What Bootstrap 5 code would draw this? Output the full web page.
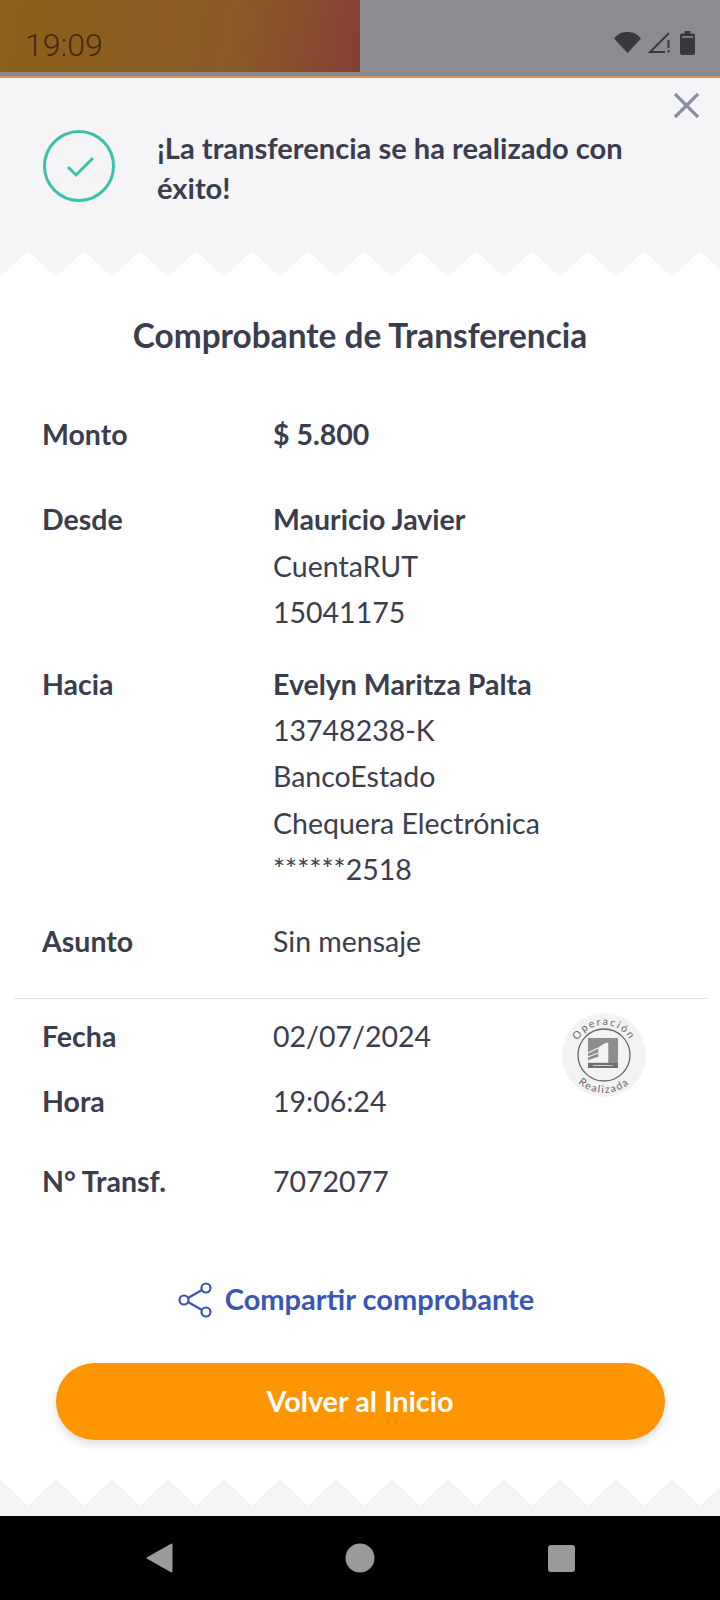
<!DOCTYPE html>
<html lang="es">
<head>
    <meta charset="UTF-8">
    <meta name="viewport" content="width=device-width, initial-scale=1.0">
    <title>Comprobante de Transferencia</title>
    <link href="https://cdn.jsdelivr.net/npm/bootstrap@5.3.0/dist/css/bootstrap.min.css" rel="stylesheet">
    <style>
        body {
            width: 720px;
            height: 1600px;
            overflow: hidden;
            background: #fff;
            font-family: Lato, "Liberation Sans", sans-serif;
            color: #3a3d4e;
            font-size: 28.5px;
        }
        .status-strip {
            height: 78px;
            padding: 31px 25px 0 25px;
            background-color: #8b8c91;
            background-image: linear-gradient(100deg, #8c6118 0%, #8b5a28 65%, #853f34 100%);
            background-size: 360px 72px;
            background-repeat: no-repeat;
            border-bottom: 2px solid #df9350;
        }
        .status-time {
            font-family: Roboto, sans-serif;
            font-size: 32px;
            font-weight: 300;
            line-height: 28px;
            color: #3d2a12;
        }
        .status-icons { gap: 7px; }
        .top-panel {
            height: 174px;
            background: #f5f5f8;
            padding: 52px 50px 0 43px;
        }
        .close-btn {
            position: absolute;
            top: 14px;
            right: 20px;
        }
        .top-msg {
            font-size: 29.1px;
            font-weight: 700;
            line-height: 40px;
            margin: -2px 0 0 42px;
        }
        .zigzag { display: block; }
        .receipt-title {
            font-size: 33.4px;
            font-weight: 700;
            line-height: 40px;
            margin: 37px 0 56px;
            text-align: center;
        }
        .info-row {
            display: flex;
            padding-left: 42px;
            line-height: 46.4px;
        }
        .info-label {
            width: 231px;
            flex: none;
            font-weight: 700;
        }
        .info-value b { font-weight: 700; }
        .row-from { margin-top: 39px; }
        .row-to { margin-top: 25px; }
        .row-subject { margin-top: 25px; }
        .row-date { margin-top: 14px; }
        .row-time { margin-top: 19px; }
        .row-number { margin-top: 33px; }
        .info-rule {
            height: 1px;
            margin: 34px 12px 0 14px;
            background: #e2e2e4;
        }
        .fecha-block { position: relative; }
        .seal {
            position: absolute;
            top: -1px;
            left: 561px;
        }
        .share-link {
            color: #3b55b5;
            font-size: 29px;
            font-weight: 700;
            text-decoration: none;
            margin-top: 71px;
            height: 46px;
            gap: 13px;
            padding-right: 8px;
        }
        .share-icon { margin-top: 4px; }
        .home-btn {
            display: block;
            width: 609px;
            height: 77px;
            margin: 42px auto 0;
            border-radius: 39px;
            border: 0;
            background: #ff9500;
            color: #fff;
            font-size: 28.8px;
            font-weight: 700;
            box-shadow: 0 4px 10px rgba(0, 0, 0, .14);
        }
        .foot-gap { height: 39px; }
        .foot-band { height: 10px; background: #f5f5f8; }
        .nav-bar {
            height: 84px;
            background: #000;
        }
    </style>
</head>
<body>

<!-- Status bar -->
<div class="status-strip d-flex justify-content-between align-items-start">
    <span class="status-time">19:09</span>
    <div class="status-icons d-flex align-items-start">
        <svg width="27" height="22" viewBox="0 0 27 22"><path d="M0 7.500C3.500 3 8 1 13.500 1S23.500 3 27 7.500L13.500 22z" fill="#38383c"/></svg>
        <svg width="25" height="23" viewBox="0 0 25 23">
            <path d="M21 2L2 21h15" fill="none" stroke="#38383c" stroke-width="1.800"/>
            <path d="M20.500 9v8M20.500 19v2.500" stroke="#38383c" stroke-width="2"/>
        </svg>
        <svg width="15" height="24" viewBox="0 0 15 24"><path d="M4.500 0h6v2.500h2.500a2 2 0 0 1 2 2V22a2 2 0 0 1-2 2H2a2 2 0 0 1-2-2V4.500a2 2 0 0 1 2-2h2.500z" fill="#38383c"/><rect x="2" y="5" width="11" height="2" fill="#77777b"/></svg>
    </div>
</div>

<!-- Success message -->
<div class="top-panel d-flex align-items-start position-relative">
    <svg class="close-btn" width="27" height="27" viewBox="0 0 27 27"><path d="M2 2l23 23M25 2L2 25" stroke="#8a8fa3" stroke-width="3.200" fill="none"/></svg>
    <svg class="flex-shrink-0" width="72" height="72" viewBox="0 0 72 72">
        <circle cx="36" cy="36" r="34.500" fill="none" stroke="#3cc0ab" stroke-width="3"/>
        <path d="M25 37l8 8 17-17" fill="none" stroke="#3cc0ab" stroke-width="3"/>
    </svg>
    <p class="top-msg">¡La transferencia se ha realizado con éxito!</p>
</div>

<!-- Torn edge, top of the receipt -->
<svg class="zigzag" width="720" height="26" viewBox="0 0 720 26">
    <rect width="720" height="26" fill="#f5f5f8"/>
    <path d="M-28 26L0 25 28-1 56 25 84-1 112 25 140-1 168 25 196-1 224 25 252-1 280 25 308-1 336 25 364-1 392 25 420-1 448 25 476-1 504 25 532-1 560 25 588-1 616 25 644-1 672 25 700-1 728 25V26z" fill="#fff"/>
</svg>

<h1 class="receipt-title">Comprobante de Transferencia</h1>

<div class="info-row"><div class="info-label">Monto</div><div class="info-value"><b>$ 5.800</b></div></div>
<div class="info-row row-from">
    <div class="info-label">Desde</div>
    <div class="info-value"><b>Mauricio Javier</b><br>CuentaRUT<br>15041175</div>
</div>
<div class="info-row row-to">
    <div class="info-label">Hacia</div>
    <div class="info-value"><b>Evelyn Maritza Palta</b><br>13748238-K<br>BancoEstado<br>Chequera Electrónica<br>******2518</div>
</div>
<div class="info-row row-subject"><div class="info-label">Asunto</div><div class="info-value">Sin mensaje</div></div>

<div class="info-rule"></div>

<div class="fecha-block">
    <div class="info-row row-date"><div class="info-label">Fecha</div><div class="info-value">02/07/2024</div></div>
    <div class="info-row row-time"><div class="info-label">Hora</div><div class="info-value">19:06:24</div></div>
    <svg class="seal" width="86" height="86" viewBox="0 0 86 86">
        <defs>
            <path id="sealTop" d="M13 43a30 30 0 0 1 60 0"/>
            <path id="sealBottom" d="M5 43a38 38 0 0 0 76 0"/>
        </defs>
        <circle cx="43" cy="43" r="42" fill="#f3f3f3"/>
        <circle cx="43" cy="43" r="26" fill="none" stroke="#666" stroke-width="1.300"/>
        <rect x="27" y="26" width="30" height="30" fill="#8e8e8e"/>
        <path d="M37.300 35.300L44 31.300l3.300-.6v20h-20V48l10-3.300z" fill="#f3f3f3"/>
        <path d="M27 41l10-5M27 45l10-4" stroke="#f3f3f3" stroke-width="1.300"/>
        <rect x="27" y="51" width="30" height="5" fill="#6e6e6e"/>
        <rect x="32" y="53" width="20" height="1" fill="#cfcfcf"/>
        <text font-family="Lato, sans-serif" font-size="10.500" letter-spacing="1.800" fill="#666"><textPath href="#sealTop" startOffset="50%" text-anchor="middle">Operación</textPath></text>
        <text font-family="Lato, sans-serif" font-size="10.500" letter-spacing="1.500" fill="#666"><textPath href="#sealBottom" startOffset="50%" text-anchor="middle">Realizada</textPath></text>
    </svg>
</div>

<div class="info-row row-number"><div class="info-label">N° Transf.</div><div class="info-value">7072077</div></div>

<!-- Actions -->
<a class="share-link d-flex justify-content-center align-items-center" href="#">
    <svg class="share-icon" width="34" height="36" viewBox="0 0 34 36">
        <g fill="none" stroke="#3b55b5" stroke-width="2.200">
            <circle cx="6" cy="18" r="4.500"/><circle cx="28" cy="6" r="4.500"/><circle cx="28" cy="30" r="4.500"/>
            <path d="M10 16L24 8M10 20l14 8"/>
        </g>
    </svg>
    Compartir comprobante
</a>
<button class="home-btn" type="button">Volver al Inicio</button>
<div class="foot-gap"></div>

<!-- Torn edge, bottom of the receipt -->
<svg class="zigzag" width="720" height="27" viewBox="0 0 720 27">
    <rect width="720" height="27" fill="#f5f5f8"/>
    <path d="M0 0L28 27 56 0 84 27 112 0 140 27 168 0 196 27 224 0 252 27 280 0 308 27 336 0 364 27 392 0 420 27 448 0 476 27 504 0 532 27 560 0 588 27 616 0 644 27 672 0 700 27 720 8V0z" fill="#fff"/>
</svg>
<div class="foot-band"></div>

<!-- Navigation bar -->
<div class="nav-bar d-flex align-items-center">
    <svg width="720" height="40" viewBox="0 0 720 40">
        <path d="M147.500 20L171.500 6.500V33.500z" fill="#9b999c" stroke="#9b999c" stroke-width="2" stroke-linejoin="round"/>
        <circle cx="360" cy="20" r="14.500" fill="#9b999c"/>
        <rect x="548" y="7" width="27" height="27" rx="3" fill="#9b999c"/>
    </svg>
</div>

<script src="https://cdn.jsdelivr.net/npm/bootstrap@5.3.0/dist/js/bootstrap.bundle.min.js"></script>
</body>
</html>
